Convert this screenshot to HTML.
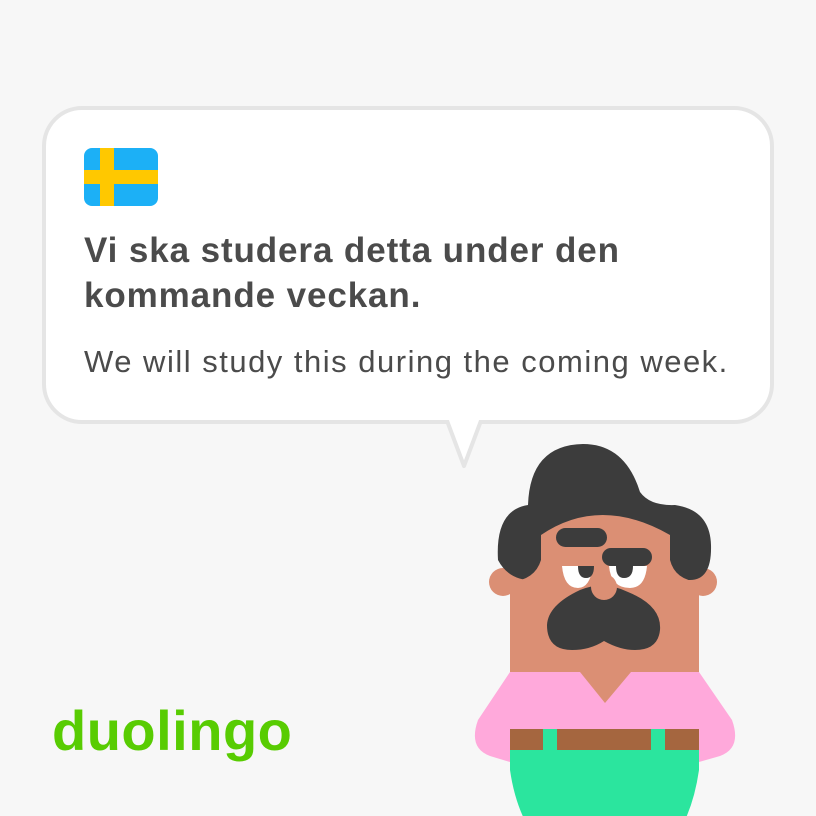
<!DOCTYPE html>
<html><head><meta charset="utf-8"><style>
html,body{margin:0;padding:0;background:#f7f7f7;width:816px;height:816px;overflow:hidden;position:relative;font-family:"Liberation Sans",sans-serif}
.bubble{position:absolute;left:42px;top:106px;width:724px;height:310px;border:4px solid #e5e5e5;border-radius:40px;background:#fff;box-sizing:content-box}
.h{position:absolute;left:84px;top:228px;font-size:35px;font-weight:bold;color:#4b4b4b;line-height:45px;letter-spacing:0.9px;white-space:nowrap}
.s{position:absolute;left:84px;top:342px;font-size:31px;color:#4b4b4b;line-height:40px;letter-spacing:1.5px;white-space:nowrap}
.logo{position:absolute;left:52px;top:698px;font-size:56px;font-weight:bold;color:#58cc02;letter-spacing:0.5px}
</style></head><body>
<div class="bubble"></div>
<svg style="position:absolute;left:0;top:0" width="816" height="816">
<path d="M446 418 L464 466 L482 418" fill="#fff" stroke="#e5e5e5" stroke-width="4" stroke-linejoin="round"/>
<rect x="442" y="412" width="44" height="8" fill="#fff"/>
<rect x="84" y="148" width="74" height="58" rx="8" fill="#1cb0f6"/>
<rect x="100" y="148" width="14" height="58" fill="#ffc800"/>
<rect x="84" y="170" width="74" height="14" fill="#ffc800"/>
<path d="M510 750 L699 750 L699 770 Q694 805 680 830 L530 830 Q515 805 510 770 Z" fill="#2be59e"/>
<path d="M510 672 L699 672 L732 720 Q742 748 720 756 L699 762 L699 729 L510 729 L510 762 L490 756 Q468 748 478 720 Z" fill="#ffa9db"/>
<path d="M580 672 L605 703 L631 672 Z" fill="#db8f74"/>
<rect x="510" y="729" width="189" height="21" fill="#a5663f"/>
<rect x="543" y="729" width="14" height="21" fill="#2be59e"/>
<rect x="651" y="729" width="14" height="21" fill="#2be59e"/>
<circle cx="503" cy="582" r="14" fill="#db8f74"/>
<circle cx="703" cy="582" r="14" fill="#db8f74"/>
<rect x="510" y="560" width="189" height="112" fill="#db8f74"/>
<path d="M528 505 Q530 445 583 444 Q625 444 640 492 Q650 506 675 505 Q710 510 711 545 Q712 580 690 580 L540 580 Q510 583 498 560 Q495 510 528 505 Z" fill="#3c3c3c"/>
<path d="M510 672 L510 582 Q535 580 541 560 L541 535 Q600 495 670 535 L670 560 Q675 580 699 582 L699 672 Z" fill="#db8f74"/>
<rect x="556" y="528" width="51" height="19" rx="9.5" fill="#3c3c3c"/>
<rect x="602" y="548" width="50" height="18" rx="9" fill="#3c3c3c"/>
<path d="M562 566 L593 566 Q590 588 578 588 Q564 588 562 566 Z" fill="#fff"/>
<path d="M609 566 L647 566 Q645 588 630 588 Q611 588 609 566 Z" fill="#fff"/>
<path d="M578 566 L594 566 Q594 578 586 578 Q578 578 578 566 Z" fill="#3c3c3c"/>
<path d="M616 566 L633 566 Q633 578 624 578 Q616 578 616 566 Z" fill="#3c3c3c"/>
<path d="M580 590 Q604 580 628 592 Q662 606 660 630 Q658 650 635 650 Q620 650 604 641 Q590 650 572 650 Q547 650 547 625 Q548 605 580 590 Z" fill="#3c3c3c"/>
<circle cx="604" cy="587" r="13" fill="#db8f74"/>
</svg>
<div class="h">Vi ska studera detta under den<br>kommande veckan.</div>
<div class="s">We will study this during the coming week.</div>
<div class="logo">duolingo</div>
</body></html>
